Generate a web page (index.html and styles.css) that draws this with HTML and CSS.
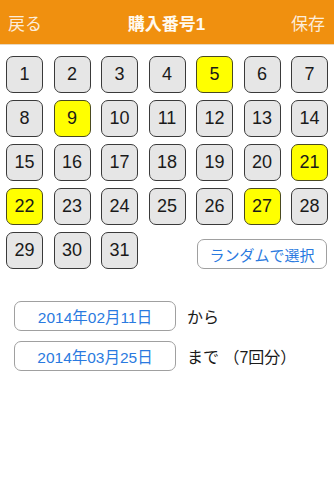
FILE: index.html
```html
<!DOCTYPE html>
<html lang="ja">
<head>
<meta charset="utf-8">
<link rel="stylesheet" href="styles.css">
</head>
<body>
<header class="nav">
  <span class="nav-btn">戻る</span>
  <span class="nav-title">購入番号1</span>
  <span class="nav-btn">保存</span>
</header>
<main class="content">
  <div class="grid">
    <div class="num">1</div><div class="num">2</div><div class="num">3</div><div class="num">4</div><div class="num on">5</div><div class="num">6</div><div class="num">7</div>
    <div class="num">8</div><div class="num on">9</div><div class="num">10</div><div class="num">11</div><div class="num">12</div><div class="num">13</div><div class="num">14</div>
    <div class="num">15</div><div class="num">16</div><div class="num">17</div><div class="num">18</div><div class="num">19</div><div class="num">20</div><div class="num on">21</div>
    <div class="num on">22</div><div class="num">23</div><div class="num">24</div><div class="num">25</div><div class="num">26</div><div class="num on">27</div><div class="num">28</div>
    <div class="num">29</div><div class="num">30</div><div class="num">31</div>
    <div class="random">ランダムで選択</div>
  </div>
  <div class="dates">
    <div class="date-row"><div class="date">2014年02月11日</div><span class="label">から</span></div>
    <div class="date-row"><div class="date">2014年03月25日</div><span class="label">まで （7回分）</span></div>
  </div>
</main>
</body>
</html>
```
FILE: styles.css
```css
html, body {
  margin: 0;
  padding: 0;
  background: #ffffff;
  font-family: "Liberation Sans", "Noto Sans CJK JP", sans-serif;
}
.nav {
  height: 45px;
  background: #f0900f;
  display: flex;
  align-items: center;
  justify-content: space-between;
  padding: 0 9px 0 8px;
  box-sizing: border-box;
  border-bottom: 1px solid #e8d8c0;
}
.nav-btn {
  color: rgba(255, 255, 255, 0.85);
  font-size: 17px;
}
.nav-title {
  color: #fffaf0;
  font-size: 17px;
  font-weight: bold;
}
.content {
  padding: 11px 6px 0 6px;
}
.grid {
  display: grid;
  grid-template-columns: repeat(7, 37px);
  grid-auto-rows: 37px;
  column-gap: 10.5px;
  row-gap: 7px;
}
.num {
  box-sizing: border-box;
  border: 1px solid #3a3a3a;
  border-radius: 7px;
  background: #e6e6e6;
  display: flex;
  align-items: center;
  justify-content: center;
  font-size: 18px;
  color: #1a1a1a;
}
.num.on {
  background: #ffff00;
  border-color: #4a4a20;
}
.random {
  grid-column: 5 / 8;
  align-self: end;
  height: 30px;
  margin: 0 1px 0 1px;
  box-sizing: border-box;
  border: 1px solid #a0a0a0;
  border-radius: 7px;
  display: flex;
  align-items: center;
  justify-content: center;
  font-size: 15px;
  color: #2a7ae0;
}
.dates {
  padding: 32px 0 0 8px;
  display: flex;
  flex-direction: column;
  gap: 10px;
}
.date-row {
  display: flex;
  align-items: center;
}
.date {
  width: 162px;
  height: 30px;
  box-sizing: border-box;
  border: 1px solid #a0a0a0;
  border-radius: 7px;
  display: flex;
  align-items: center;
  justify-content: center;
  font-size: 15.5px;
  color: #2a7ae0;
}
.label {
  margin-left: 11px;
  font-size: 16px;
  color: #1a1a1a;
}
```
